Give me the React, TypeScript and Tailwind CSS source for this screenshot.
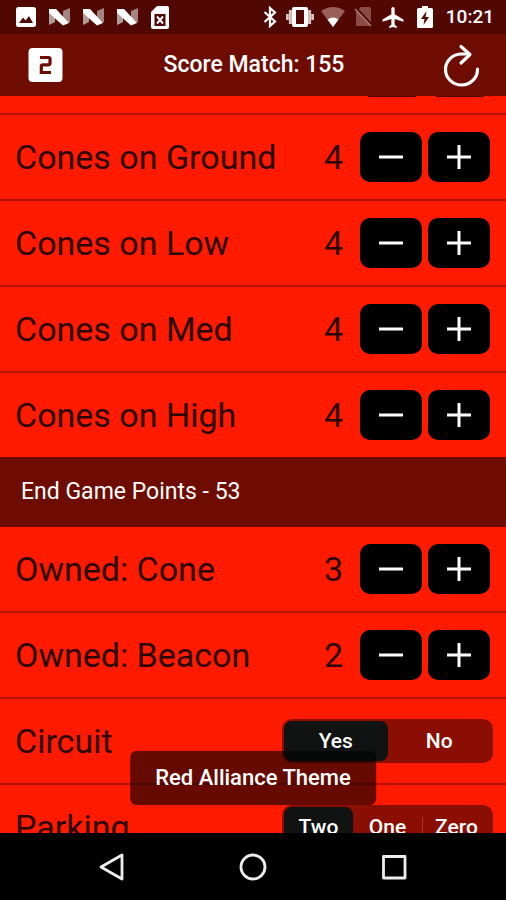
import type { ReactNode } from "react";
import { useState } from "react";

function NougatIcon() {
  return (
    <svg className="h-[18px] w-[21px]" viewBox="0 0 21 18" aria-hidden="true">
      <path d="M0 4L6 9V14L0 17Z" fill="#b09c9a" />
      <path d="M14 3L21 0V14L19 15L14 9Z" fill="#a38481" />
      <path d="M0 1H7L20 15L14 17.500L0 5Z" fill="#fff" />
    </svg>
  );
}

function StatusBar() {
  return (
    <div className="flex h-[34px] shrink-0 items-center justify-between bg-[#520802] pr-3 pl-4 text-white">
      <div className="flex items-center gap-[13px]">
        <svg className="h-5 w-5" viewBox="0 0 20 20" aria-hidden="true">
          <rect width="20" height="20" rx="2.5" fill="#fff" />
          <path d="M3 16L7 10.5L9.5 13.5L13 9L17 16Z" fill="#520802" />
        </svg>
        <NougatIcon />
        <NougatIcon />
        <NougatIcon />
        <svg className="h-[23px] w-[18px]" viewBox="0 0 18 23" aria-hidden="true">
          <path d="M6 0H16Q18 0 18 2V21Q18 23 16 23H2Q0 23 0 21V6Z" fill="#fff" />
          <path d="M3.5 8H14.5V20H3.5Z" fill="#520802" />
          <path d="M6 10.5L12 17.5M12 10.5L6 17.5" stroke="#fff" strokeWidth="2" />
        </svg>
      </div>
      <div className="flex items-center">
        <svg className="h-[22px] w-[14px]" viewBox="0 0 14 22" fill="none" stroke="#fff" strokeWidth="2.2" aria-hidden="true">
          <path d="M1.5 6L12 15.5L7 20V2L12 6.5L1.5 16" />
        </svg>
        <svg className="ml-[9px] h-5 w-7" viewBox="0 0 28 20" aria-hidden="true">
          <rect x="6" width="16" height="20" rx="2" fill="#fff" />
          <rect x="10" y="3" width="8" height="14" fill="#520802" />
          <path d="M4.400 3V17M23.600 3V17" stroke="#d9c4c2" strokeWidth="3" />
          <path d="M1.400 7V13M26.600 7V13" stroke="#d9c4c2" strokeWidth="2.800" />
        </svg>
        <svg className="ml-[7px] h-5 w-6" viewBox="0 0 24 20" aria-hidden="true">
          <path d="M0 4Q12 -4 24 4L12 20Z" fill="#9b5f5a" />
          <path d="M6.5 12.5Q12 8.5 17.5 12.5L12 20Z" fill="#fff" />
        </svg>
        <svg className="ml-[9px] h-5 w-[19px]" viewBox="0 0 19 20" aria-hidden="true">
          <path d="M7 0H15Q17 0 17 2V19H2V5Z" fill="#8a4b46" />
          <path d="M2.5 1.5L18 18" stroke="#520802" strokeWidth="2.5" />
          <path d="M1 2L17 19" stroke="#a5716d" strokeWidth="1.8" />
        </svg>
        <svg className="ml-[9px] h-[21px] w-[22px]" viewBox="2 2 20 20" preserveAspectRatio="none" fill="#fff" aria-hidden="true">
          <path d="M21.5 16V14L13.5 9V3.5C13.5 2.7 12.8 2 12 2S10.500 2.700 10.500 3.500V9L2.500 14V16L10.500 13.500V19L8.500 20.500V22L12 21L15.500 22V20.500L13.500 19V13.500Z" />
        </svg>
        <svg className="ml-[13px] h-[22px] w-4" viewBox="0 0 16 22" aria-hidden="true">
          <path d="M5 0H11V2H14.500Q16 2 16 3.500V20.500Q16 22 14.500 22H1.500Q0 22 0 20.500V3.500Q0 2 1.500 2H5Z" fill="#fff" />
          <path d="M9.500 5L4 13H7.500L6.500 19L12 11H8.500Z" fill="#520802" />
        </svg>
        <time className="ml-[13px] text-[19px] leading-6 font-medium">10:21</time>
      </div>
    </div>
  );
}

function Header() {
  return (
    <header className="grid h-[62px] shrink-0 grid-cols-[1fr_auto_1fr] items-center bg-[#6f0c02] pr-[26px] pl-7 text-white">
      <button type="button" aria-label="Two teams" className="h-9 w-9">
        <svg className="h-9 w-9" viewBox="0 0 36 36" aria-hidden="true">
          <rect x="0.500" y="1" width="34" height="34" rx="4" fill="#fff" />
          <path d="M12 10.500H20.500Q22 10.500 22 12V16Q22 17.800 20.200 17.800H15Q13.300 17.800 13.300 19.500V25.500H23" fill="none" stroke="#6f0c02" strokeWidth="3.200" />
        </svg>
      </button>
      <h1 className="text-[23px] leading-8 font-medium">Score Match: 155</h1>
      <button type="button" aria-label="Reset score" className="justify-self-end">
        <svg className="h-11 w-9" viewBox="0 0 36 44" fill="none" stroke="#fff" strokeWidth="3.200" strokeLinecap="round" strokeLinejoin="round" aria-hidden="true">
          <path d="M33.500 26A16 15.500 0 1 1 17.500 11H25" />
          <path d="M17 3.500L26 11.500L17 20" />
        </svg>
      </button>
    </header>
  );
}

const rowClass =
  "flex h-[86px] shrink-0 items-center border-b-2 border-[#b81002] pl-[15px] text-[34px] leading-10 text-[#2b0502]";

const stepButtonClass =
  "flex h-[50px] w-[62px] items-center justify-center rounded-[10px] bg-black";

function StepRow({ label, initial }: { label: string; initial: number }) {
  const [value, setValue] = useState(initial);
  return (
    <div className={rowClass}>
      <span className="flex-1">{label}</span>
      <output aria-label={label} className="mr-[17px]">{value}</output>
      <div className="mr-4 flex gap-1.5">
        <button type="button" aria-label={`Decrease ${label}`} className={stepButtonClass} onClick={() => setValue(Math.max(0, value - 1))}>
          <svg className="h-6 w-6" viewBox="0 0 24 24" stroke="#fff" strokeWidth="3" aria-hidden="true">
            <path d="M0 12H24" />
          </svg>
        </button>
        <button type="button" aria-label={`Increase ${label}`} className={stepButtonClass} onClick={() => setValue(value + 1)}>
          <svg className="h-6 w-6" viewBox="0 0 24 24" stroke="#fff" strokeWidth="3" aria-hidden="true">
            <path d="M0 12H24M12 0V24" />
          </svg>
        </button>
      </div>
    </div>
  );
}

function ChoiceRow({ label, options }: { label: string; options: string[] }) {
  const [selected, setSelected] = useState(0);
  const labelId = `${label}-label`;
  return (
    <div role="radiogroup" aria-labelledby={labelId} className={rowClass}>
      <span id={labelId} className="flex-1">{label}</span>
      <div className="mr-[13px] flex h-11 w-[211px] rounded-[10px] bg-[#8a0f02] p-0.5 text-[21px] leading-6 font-medium text-white">
        {options.map((option, i) => (
          <label
            key={option}
            className={
              i === selected
                ? "relative flex flex-1 items-center justify-center rounded-lg bg-[#111313]"
                : "relative flex flex-1 items-center justify-center"
            }
          >
            <input type="radio" name={label} className="sr-only" checked={i === selected} onChange={() => setSelected(i)} />
            {i > selected + 1 && <span className="absolute left-0 h-5 w-px bg-[#a83a2e]" />}
            {option}
          </label>
        ))}
      </div>
    </div>
  );
}

function Toast({ children }: { children: ReactNode }) {
  return (
    <div role="status" className="absolute bottom-7 left-1/2 -translate-x-1/2 rounded-md bg-black/60 px-[25px] py-[11px] text-[22px] leading-8 font-medium whitespace-nowrap text-white">
      {children}
    </div>
  );
}

function NavBar() {
  return (
    <nav className="flex h-[67px] shrink-0 items-center bg-black px-[42px]" aria-label="System">
      <button type="button" aria-label="Back" className="flex flex-1 justify-center">
        <svg className="h-7 w-7" viewBox="0 0 28 28" fill="none" stroke="#eee" strokeWidth="2.800" strokeLinejoin="round" aria-hidden="true">
          <path d="M24 2V26L3 14Z" />
        </svg>
      </button>
      <button type="button" aria-label="Home" className="flex flex-1 justify-center">
        <svg className="h-7 w-7" viewBox="0 0 28 28" fill="none" stroke="#eee" strokeWidth="2.800" aria-hidden="true">
          <circle cx="14" cy="14" r="12" />
        </svg>
      </button>
      <button type="button" aria-label="Recent apps" className="flex flex-1 justify-center">
        <svg className="h-7 w-7" viewBox="0 0 28 28" fill="none" stroke="#eee" strokeWidth="2.800" strokeLinejoin="round" aria-hidden="true">
          <rect x="3.500" y="3.500" width="21.500" height="21.500" />
        </svg>
      </button>
    </nav>
  );
}

export default function App() {
  return (
    <div className="flex h-screen flex-col font-[Roboto,sans-serif]">
      <StatusBar />
      <Header />
      <div className="relative flex min-h-0 flex-1 flex-col">
        <main className="flex min-h-0 flex-1 flex-col overflow-hidden bg-[#ff1a00]">
          <div className="flex h-[19px] shrink-0 justify-end gap-5 border-b-2 border-[#b81002] pr-[22px]">
            <span className="h-px w-12 bg-[#520802]" />
            <span className="h-px w-12 bg-[#520802]" />
          </div>
          <StepRow label="Cones on Ground" initial={4} />
          <StepRow label="Cones on Low" initial={4} />
          <StepRow label="Cones on Med" initial={4} />
          <StepRow label="Cones on High" initial={4} />
          <h2 className="-mt-0.5 flex h-[70px] shrink-0 items-center bg-[#6f0c02] pl-[21px] text-[23px] leading-8 text-white">
            End Game Points - 53
          </h2>
          <StepRow label="Owned: Cone" initial={3} />
          <StepRow label="Owned: Beacon" initial={2} />
          <ChoiceRow label="Circuit" options={["Yes", "No"]} />
          <ChoiceRow label="Parking" options={["Two", "One", "Zero"]} />
        </main>
        <Toast>Red Alliance Theme</Toast>
      </div>
      <NavBar />
    </div>
  );
}
